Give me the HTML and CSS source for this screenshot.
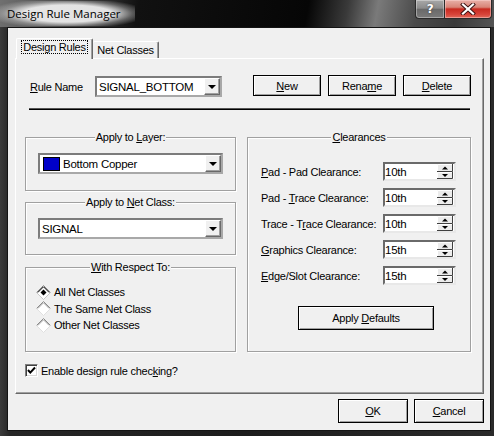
FILE: index.html
```html
<!DOCTYPE html>
<html>
<head>
<meta charset="utf-8">
<link rel="stylesheet" href="styles.css">
</head>
<body>
<div class="window">
  <div class="titlebar">
    <div class="title"><span class="title-text">Design Rule Manager</span></div>
    <div class="caption-btns">
      <div class="cbtn help">?</div>
      <div class="cbtn close">
        <svg width="16" height="12" viewBox="0 0 16 12"><path d="M3 1.5 L13 10.5 M13 1.5 L3 10.5" stroke="#3a1010" stroke-width="4" stroke-linecap="square"/><path d="M3 1.5 L13 10.5 M13 1.5 L3 10.5" stroke="#fff" stroke-width="2.2" stroke-linecap="square"/></svg>
      </div>
    </div>
  </div>
  <div class="client">
    <div class="tabs">
      <div class="tab active"><span class="focus">Design Rules</span></div>
      <div class="tab inactive">Net Classes</div>
    </div>
    <div class="panel">
      <div class="top-area">
        <div class="rule-row">
          <span class="rule-label"><u>R</u>ule Name</span>
          <div class="combo w-rule">
            <span class="combo-text">SIGNAL_BOTTOM</span>
            <span class="combo-btn"><i class="tri-down"></i></span>
          </div>
          <div class="btns">
            <div class="btn small"><span><u>N</u>ew</span></div>
            <div class="btn small"><span>Rena<u>m</u>e</span></div>
            <div class="btn small"><span><u>D</u>elete</span></div>
          </div>
        </div>
        <div class="sep"></div>
      </div>
      <div class="cols">
        <div class="left">
          <div class="group g1">
            <div class="gtitle">Apply to <u>L</u>ayer:</div>
            <div class="combo w-layer">
              <span class="combo-text"><span class="swatch"></span>Bottom Copper</span>
              <span class="combo-btn"><i class="tri-down"></i></span>
            </div>
          </div>
          <div class="group g2">
            <div class="gtitle">Apply to <u>N</u>et Class:</div>
            <div class="combo w-layer">
              <span class="combo-text">SIGNAL</span>
              <span class="combo-btn"><i class="tri-down"></i></span>
            </div>
          </div>
          <div class="group g3">
            <div class="gtitle"><u>W</u>ith Respect To:</div>
            <div class="radios">
              <div class="radio">
                <svg width="15" height="15" viewBox="0 0 15 15"><polygon points="7.5,0.5 14.5,7.5 7.5,14.5 0.5,7.5" fill="#fff"/><path d="M0.5 7.5 L7.5 0.5 L14.5 7.5" stroke="#8a8a8a" fill="none"/><path d="M1.8 7.5 L7.5 1.8 L13.2 7.5" stroke="#000" fill="none"/><path d="M0.5 7.5 L7.5 14.5 L14.5 7.5" stroke="#c8c8c8" fill="none"/><polygon points="7.5,4.5 10.5,7.5 7.5,10.5 4.5,7.5" fill="#000"/></svg>
                <span>All Net Classes</span>
              </div>
              <div class="radio">
                <svg width="15" height="15" viewBox="0 0 15 15"><polygon points="7.5,0.5 14.5,7.5 7.5,14.5 0.5,7.5" fill="#fff"/><path d="M0.5 7.5 L7.5 0.5 L14.5 7.5" stroke="#8a8a8a" fill="none"/><path d="M1.8 7.5 L7.5 1.8 L13.2 7.5" stroke="#a0a0a0" fill="none"/><path d="M0.5 7.5 L7.5 14.5 L14.5 7.5" stroke="#e0e0e0" fill="none"/></svg>
                <span>The Same Net Class</span>
              </div>
              <div class="radio">
                <svg width="15" height="15" viewBox="0 0 15 15"><polygon points="7.5,0.5 14.5,7.5 7.5,14.5 0.5,7.5" fill="#fff"/><path d="M0.5 7.5 L7.5 0.5 L14.5 7.5" stroke="#8a8a8a" fill="none"/><path d="M1.8 7.5 L7.5 1.8 L13.2 7.5" stroke="#a0a0a0" fill="none"/><path d="M0.5 7.5 L7.5 14.5 L14.5 7.5" stroke="#e0e0e0" fill="none"/></svg>
                <span>Other Net Classes</span>
              </div>
            </div>
          </div>
          <div class="check-row">
            <span class="checkbox"><svg width="11" height="11" viewBox="0 0 11 11"><path d="M2 5 L4.3 7.6 L9 2.5" stroke="#000" stroke-width="2" fill="none"/></svg></span>
            <span>Enable design rule chec<u>k</u>ing?</span>
          </div>
        </div>
        <div class="group clear">
          <div class="gtitle"><u>C</u>learances</div>
          <div class="crows">
            <div class="crow"><span class="clabel"><u>P</u>ad - Pad Clearance:</span><div class="spin"><span class="spin-text">10th</span><svg class="spinbtn" width="16" height="15" viewBox="0 0 16 15"><rect width="16" height="15" fill="#ececec"/><path d="M0.5 7 V0.5 H15" stroke="#fff" fill="none"/><path d="M15.5 0 V7.5 H0" stroke="#404040" fill="none"/><path d="M0.5 14 V8.5 H15" stroke="#fff" fill="none"/><path d="M15.5 8 V14.5 H0" stroke="#404040" fill="none"/><path d="M5 5.5 H11 L8 2.5 Z" fill="#000"/><path d="M5 10 H11 L8 13 Z" fill="#000"/></svg></div></div>
            <div class="crow"><span class="clabel">Pad - <u>T</u>race Clearance:</span><div class="spin"><span class="spin-text">10th</span><svg class="spinbtn" width="16" height="15" viewBox="0 0 16 15"><rect width="16" height="15" fill="#ececec"/><path d="M0.5 7 V0.5 H15" stroke="#fff" fill="none"/><path d="M15.5 0 V7.5 H0" stroke="#404040" fill="none"/><path d="M0.5 14 V8.5 H15" stroke="#fff" fill="none"/><path d="M15.5 8 V14.5 H0" stroke="#404040" fill="none"/><path d="M5 5.5 H11 L8 2.5 Z" fill="#000"/><path d="M5 10 H11 L8 13 Z" fill="#000"/></svg></div></div>
            <div class="crow"><span class="clabel">Trace - T<u>r</u>ace Clearance:</span><div class="spin"><span class="spin-text">10th</span><svg class="spinbtn" width="16" height="15" viewBox="0 0 16 15"><rect width="16" height="15" fill="#ececec"/><path d="M0.5 7 V0.5 H15" stroke="#fff" fill="none"/><path d="M15.5 0 V7.5 H0" stroke="#404040" fill="none"/><path d="M0.5 14 V8.5 H15" stroke="#fff" fill="none"/><path d="M15.5 8 V14.5 H0" stroke="#404040" fill="none"/><path d="M5 5.5 H11 L8 2.5 Z" fill="#000"/><path d="M5 10 H11 L8 13 Z" fill="#000"/></svg></div></div>
            <div class="crow"><span class="clabel"><u>G</u>raphics Clearance:</span><div class="spin"><span class="spin-text">15th</span><svg class="spinbtn" width="16" height="15" viewBox="0 0 16 15"><rect width="16" height="15" fill="#ececec"/><path d="M0.5 7 V0.5 H15" stroke="#fff" fill="none"/><path d="M15.5 0 V7.5 H0" stroke="#404040" fill="none"/><path d="M0.5 14 V8.5 H15" stroke="#fff" fill="none"/><path d="M15.5 8 V14.5 H0" stroke="#404040" fill="none"/><path d="M5 5.5 H11 L8 2.5 Z" fill="#000"/><path d="M5 10 H11 L8 13 Z" fill="#000"/></svg></div></div>
            <div class="crow"><span class="clabel"><u>E</u>dge/Slot Clearance:</span><div class="spin"><span class="spin-text">15th</span><svg class="spinbtn" width="16" height="15" viewBox="0 0 16 15"><rect width="16" height="15" fill="#ececec"/><path d="M0.5 7 V0.5 H15" stroke="#fff" fill="none"/><path d="M15.5 0 V7.5 H0" stroke="#404040" fill="none"/><path d="M0.5 14 V8.5 H15" stroke="#fff" fill="none"/><path d="M15.5 8 V14.5 H0" stroke="#404040" fill="none"/><path d="M5 5.5 H11 L8 2.5 Z" fill="#000"/><path d="M5 10 H11 L8 13 Z" fill="#000"/></svg></div></div>
          </div>
          <div class="btn defaults"><span>Apply <u>D</u>efaults</span></div>
        </div>
      </div>
    </div>
    <div class="footer">
      <div class="btn big"><span><u>O</u>K</span></div>
      <div class="btn big"><span><u>C</u>ancel</span></div>
    </div>
  </div>
</div>
</body>
</html>
```
FILE: styles.css
```css
* { box-sizing: border-box; }
html, body { margin: 0; padding: 0; }
body {
  width: 494px;
  height: 436px;
  overflow: hidden;
  background: #2a2a2a;
  font-family: "Liberation Sans", Arial, sans-serif;
  font-size: 11px;
  letter-spacing: -0.25px;
  color: #000;
}
u { text-decoration: underline; text-underline-offset: 1px; }

.window {
  width: 494px;
  height: 436px;
  display: flex;
  flex-direction: column;
  background: linear-gradient(90deg, #3c3c3c 0, #262626 2%, #1c1c1c 50%, #2a2a2a 100%);
}

.titlebar {
  height: 27px;
  display: flex;
  justify-content: space-between;
  align-items: flex-start;
  background: linear-gradient(100deg, #707070 0%, #444 16%, #111 28%, #060606 62%, #3a3a3a 70%, #7a7a7a 76%, #4a4a4a 84%, #3a3a3a 92%, #555 100%);
}
.title {
  height: 27px;
  display: flex;
  align-items: center;
  padding-left: 0;
}
.title-text {
  font-family: "Open Sans", "Noto Sans", sans-serif;
  font-size: 11.5px;
  letter-spacing: 0;
  color: #000;
  padding: 5px 14px 5px 7px;
  background: radial-gradient(ellipse 60% 62% at 50% 50%, rgba(236,236,236,0.95) 55%, rgba(200,200,200,0.4) 80%, rgba(120,120,120,0) 100%);
}

.caption-btns {
  display: flex;
  margin-right: 2px;
}
.cbtn {
  height: 19px;
  display: flex;
  align-items: center;
  justify-content: center;
  border: 1px solid #2a2a2a;
  border-top: none;
}
.help {
  width: 29px;
  border-radius: 0 0 0 4px;
  background: linear-gradient(180deg, #a8a8a8 0%, #8c8c8c 45%, #6a6a6a 52%, #7a7a7a 100%);
  box-shadow: inset 0 0 0 1px rgba(255,255,255,0.35);
  color: #fff;
  font-family: "DejaVu Sans", sans-serif;
  font-weight: bold;
  font-size: 12px;
  text-shadow: 0 0 2px #333;
  border-right: none;
}
.close {
  width: 48px;
  border-radius: 0 0 4px 0;
  background: linear-gradient(180deg, #e8b0a8 0%, #d88478 40%, #c82a20 50%, #d8443a 80%, #e06a5a 100%);
  box-shadow: inset 0 0 0 1px rgba(255,220,220,0.45);
}

.client {
  flex: 1;
  margin: 0 3px 5px 7px;
  border: 1px solid #141414;
  background: #f0f0f0;
  display: flex;
  flex-direction: column;
}

.tabs {
  display: flex;
  align-items: flex-end;
  margin: 10px 0 0 7px;
  height: 20px;
  position: relative;
  z-index: 1;
}
.tab {
  background: #f0f0f0;
  border-top: 1px solid #fff;
  border-left: 1px solid #fff;
  border-right: 1px solid #696969;
  box-shadow: inset -1px 0 #a0a0a0;
  border-radius: 2px 2px 0 0;
  display: flex;
  justify-content: center;
  align-items: flex-start;
}
.tab.active {
  margin-left: 1px;
  width: 77px;
  height: 21px;
  margin-bottom: -1px;
  padding-top: 2px;
}
.focus {
  outline: 1px dotted #000;
  outline-offset: 0;
  padding: 0 1px;
  line-height: 12px;
}
.tab.inactive {
  width: 66px;
  height: 17px;
  padding-top: 2px;
  border-left: none;
}

.panel {
  width: 469px;
  height: 336px;
  margin-left: 7px;
  border: 1px solid;
  border-color: #fff #696969 #696969 #fff;
  box-shadow: inset -1px -1px #a0a0a0;
  padding: 16px 12px 0 9px;
}

.top-area { margin-left: 4px; }
.rule-row {
  display: flex;
  height: 22px;
}
.rule-label {
  width: 66px;
  padding-left: 1px;
  align-self: center;
  margin-top: 2px;
}
.combo {
  display: flex;
  height: 21px;
  background: #fff;
  border: 2px solid;
  border-color: #7c7c7c #a8a8a8 #a8a8a8 #7c7c7c;
}
.w-rule { width: 127px; align-self: flex-end; }
.w-layer { width: 185px; margin: 9px 0 0 12px; }
.combo-text {
  flex: 1;
  display: flex;
  align-items: center;
  padding-left: 2px;
  font-size: 11.5px;
  white-space: nowrap;
}
.combo-btn {
  width: 16px;
  height: 17px;
  background: #f0f0f0;
  border: 1px solid;
  border-color: #fff #696969 #696969 #fff;
  box-shadow: inset -1px -1px #a0a0a0;
  display: flex;
  align-items: center;
  justify-content: center;
}
.tri-down {
  width: 0;
  height: 0;
  border-left: 4px solid transparent;
  border-right: 4px solid transparent;
  border-top: 4px solid #000;
  margin-top: 1px;
}
.swatch {
  width: 17px;
  height: 14px;
  background: #0000c8;
  border: 1px solid #000;
  margin: 0 3px 0 1px;
}

.btns {
  margin-left: auto;
  display: flex;
  gap: 7px;
  align-self: flex-start;
}
.btn {
  background: #f0f0f0;
  border: 1px solid #000;
  box-shadow: inset 1px 1px #fff, inset -1px -1px #a0a0a0;
  display: flex;
  align-items: center;
  justify-content: center;
}
.btn.small { width: 68px; height: 21px; }
.btn.big { width: 70px; height: 24px; }

.sep {
  margin-top: 11px;
  margin-right: 1px;
  border-top: 1px solid #555;
  border-bottom: 1px solid #000;
}

.cols {
  display: flex;
  gap: 11px;
  margin-top: 27px;
}
.left {
  width: 211px;
  display: flex;
  flex-direction: column;
}
.group {
  border: 1px solid #a0a0a0;
  box-shadow: inset 1px 1px #fff, 1px 1px #fff;
  display: flex;
  flex-direction: column;
}
.gtitle {
  align-self: center;
  margin-top: -7px;
  line-height: 13px;
  background: #f0f0f0;
  padding: 0 1px;
}
.g1 { height: 54px; }
.g2 { height: 53px; margin-top: 11px; }
.g3 { height: 85px; margin-top: 12px; }

.radios {
  margin: 10px 0 0 10px;
  display: flex;
  flex-direction: column;
}
.radio {
  height: 16.5px;
  display: flex;
  align-items: center;
  gap: 3px;
}

.check-row {
  margin-top: 12px;
  display: flex;
  align-items: center;
  gap: 3px;
}
.checkbox {
  width: 13px;
  height: 13px;
  background: #fff;
  border: 1px solid;
  border-color: #808080 #fff #fff #808080;
  box-shadow: inset 1px 1px #404040, inset -1px -1px #d8d8d8;
  display: flex;
  align-items: center;
  justify-content: center;
}

.clear {
  width: 224px;
  height: 215px;
}
.crows {
  margin: 18px 0 0 13px;
  display: flex;
  flex-direction: column;
  gap: 7px;
}
.crow {
  display: flex;
  align-items: center;
  height: 19px;
}
.clabel { width: 122px; white-space: nowrap; }
.spin {
  width: 73px;
  height: 19px;
  display: flex;
  align-items: center;
  background: #fff;
  border: 2px solid;
  border-color: #6a6a6a #e8e8e8 #e8e8e8 #6a6a6a;
  padding-right: 1px;
}
.spin-text {
  flex: 1;
  padding-left: 0;
  font-size: 11.5px;
}
.spinbtn { display: block; }

.btn.defaults {
  width: 136px;
  height: 24px;
  margin: 21px 0 0 50px;
}

.footer {
  display: flex;
  justify-content: flex-end;
  gap: 6px;
  margin-top: 5px;
  padding-right: 6px;
}
```
